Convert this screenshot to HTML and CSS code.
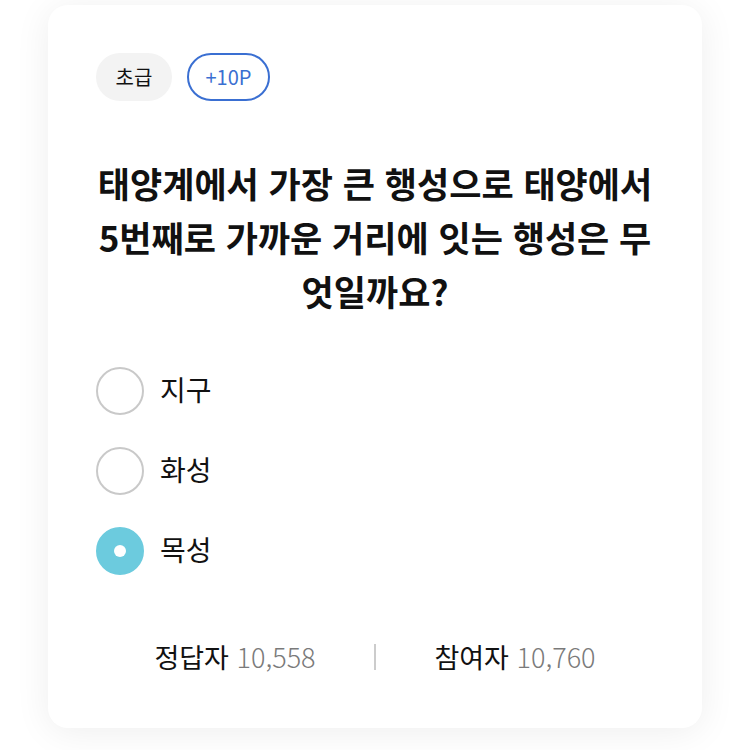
FILE: index.html
```html
<!DOCTYPE html>
<html lang="ko">
<head>
<meta charset="utf-8">
<link rel="stylesheet" href="styles.css">
</head>
<body>
<div class="card">
  <div class="chips">
    <span class="chip chip-level">초급</span>
    <span class="chip chip-point">+10P</span>
  </div>
  <h1 class="question">태양계에서 가장 큰 행성으로 태양에서 5번째로 가까운 거리에 잇는 행성은 무엇일까요?</h1>
  <ul class="options">
    <li class="option"><span class="radio"></span><span class="label">지구</span></li>
    <li class="option"><span class="radio"></span><span class="label">화성</span></li>
    <li class="option selected"><span class="radio"></span><span class="label">목성</span></li>
  </ul>
  <div class="stats">
    <div class="stat"><span class="stat-label">정답자</span> <span class="stat-num">10,558</span></div>
    <div class="divider"></div>
    <div class="stat"><span class="stat-label">참여자</span> <span class="stat-num">10,760</span></div>
  </div>
</div>
</body>
</html>
```
FILE: styles.css
```css
* { box-sizing: border-box; }
html, body { margin: 0; padding: 0; }
body {
  background: #ffffff;
  font-family: "Noto Sans CJK KR", "Noto Sans", sans-serif;
  color: #111;
  width: 750px;
  height: 750px;
  overflow: hidden;
}
.card {
  margin: 5px 0 0 48px;
  width: 654px;
  height: 723px;
  background: #fff;
  border-radius: 20px;
  box-shadow: 0 4px 36px rgba(0, 0, 0, 0.07);
  padding: 48px 48px 0 48px;
}
.chips {
  display: flex;
  gap: 15px;
}
.chip {
  height: 48px;
  border-radius: 24px;
  display: flex;
  align-items: center;
  justify-content: center;
  font-size: 20px;
  line-height: 1;
}
.chip-level {
  width: 76px;
  background: #f3f3f3;
  color: #111;
}
.chip-point {
  width: 83px;
  border: 2px solid #3a6fd2;
  color: #3a6fd2;
}
.question {
  margin: 55px 0 0 0;
  font-size: 35px;
  font-weight: 700;
  line-height: 54px;
  text-align: center;
  color: #111;
}
.options {
  list-style: none;
  margin: 49px 0 0 0;
  padding: 0;
  display: flex;
  flex-direction: column;
  gap: 32px;
}
.option {
  display: flex;
  align-items: center;
  gap: 16px;
  height: 48px;
}
.radio {
  width: 48px;
  height: 48px;
  border-radius: 50%;
  border: 2px solid #c9c9c9;
  display: flex;
  align-items: center;
  justify-content: center;
  flex: none;
}
.selected .radio {
  background: #6ccbde;
  border-color: #6ccbde;
}
.selected .radio::after {
  content: "";
  width: 12px;
  height: 12px;
  border-radius: 50%;
  background: #fff;
}
.label {
  font-size: 28px;
  color: #111;
  padding-bottom: 4px;
}
.stats {
  margin-top: 62px;
  display: flex;
  align-items: center;
  height: 40px;
}
.stat {
  flex: 1;
  text-align: center;
  font-size: 27px;
  line-height: 40px;
}
.stat-label { color: #111; }
.stat-num { color: #7a7a7a; font-weight: 300; }
.divider {
  width: 2px;
  height: 26px;
  background: #cccccc;
  flex: none;
}
```
